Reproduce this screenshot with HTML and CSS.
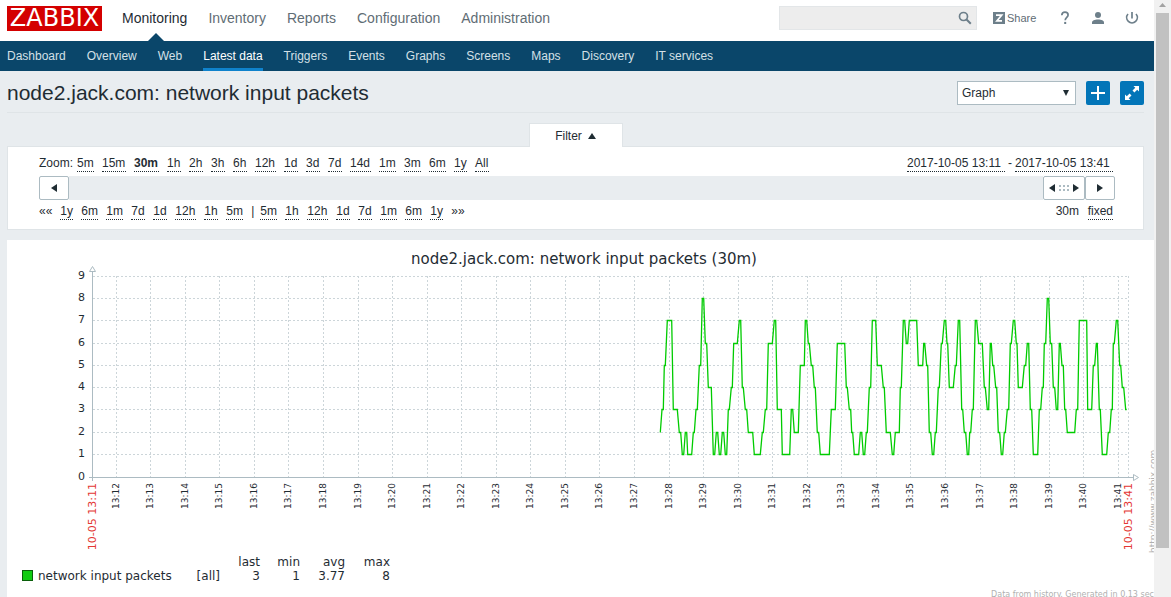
FILE: index.html
```html
<!DOCTYPE html>
<html lang="en">
<head>
<meta charset="utf-8">
<title>Zabbix: node2.jack.com</title>
<link rel="stylesheet" href="styles.css">
</head>
<body>
<div class="page">
  <header class="top">
    <a class="logo" href="#">ZABBIX</a>
    <nav class="menu" aria-label="Main">
      <a class="active" href="#">Monitoring</a>
      <a href="#">Inventory</a>
      <a href="#">Reports</a>
      <a href="#">Configuration</a>
      <a href="#">Administration</a>
    </nav>
    <form class="search">
      <input type="text" aria-label="Search">
      <button type="button" aria-label="Run search"><svg width="14" height="14" viewBox="0 0 14 14"><circle cx="5.5" cy="5.5" r="4" fill="none" stroke="#6d7f8a" stroke-width="1.7"/><path d="M8.5 8.5L12.8 12.8" stroke="#6d7f8a" stroke-width="2"/></svg></button>
    </form>
    <div class="tools">
      <a class="share" href="#"><svg width="12" height="12" viewBox="0 0 12 12"><rect width="12" height="12" fill="#6d7f8a"/><path d="M3 3.2H8.6L4 8.8H9" fill="none" stroke="#fff" stroke-width="1.8"/></svg>Share</a>
      <a class="help" href="#" aria-label="Help"><svg width="12" height="14" viewBox="0 0 12 14"><path d="M2.800 4.200C2.900 2.200 4.300 1.200 6 1.200c1.900 0 3.100 1.100 3.100 2.700 0 2.300-2.900 2.500-2.900 5.300" fill="none" stroke="#6d7f8a" stroke-width="1.7"/><rect x="5.200" y="10.900" width="2" height="2.100" fill="#6d7f8a"/></svg></a>
      <a href="#" aria-label="Profile"><svg width="12" height="14" viewBox="0 0 12 14"><circle cx="6" cy="4" r="3" fill="#6d7f8a"/><path d="M0 13v-1.500C0 9.500 2.500 8.500 6 8.500s6 1 6 3V13z" fill="#6d7f8a"/></svg></a>
      <a href="#" aria-label="Sign out"><svg width="14" height="14" viewBox="0 0 14 14"><path d="M3 3A5.300 5.300 0 1 0 11 3M7 1V7.500" fill="none" stroke="#6d7f8a" stroke-width="1.700"/></svg></a>
    </div>
  </header>
  <nav class="submenu" aria-label="Monitoring">
    <a href="#">Dashboard</a>
    <a href="#">Overview</a>
    <a href="#">Web</a>
    <a class="active" href="#">Latest data</a>
    <a href="#">Triggers</a>
    <a href="#">Events</a>
    <a href="#">Graphs</a>
    <a href="#">Screens</a>
    <a href="#">Maps</a>
    <a href="#">Discovery</a>
    <a href="#">IT services</a>
  </nav>
  <div class="heading">
    <h1>node2.jack.com: network input packets</h1>
    <div class="select">
      <select aria-label="View as"><option>Graph</option><option>Values</option></select>
      <svg width="8" height="6" viewBox="0 0 8 6"><path d="M1 0H7L4 6z" fill="#1f2c33"/></svg>
    </div>
    <button class="square" type="button" aria-label="Add to favourites"><svg width="14" height="14" viewBox="0 0 14 14"><path d="M7 0V14M0 7H14" stroke="#fff" stroke-width="2"/></svg></button>
    <button class="square" type="button" aria-label="Fullscreen"><svg width="14" height="14" viewBox="0 0 14 14"><path d="M8.500 0H14V5.500L12.200 3.700 9.400 6.500 7.500 4.600 10.300 1.800zM0 8.500L1.800 10.300 4.600 7.500 6.500 9.400 3.700 12.200 5.500 14H0z" fill="#fff"/></svg></button>
  </div>
  <section class="filter">
    <button class="tab" type="button">Filter<svg width="8" height="6" viewBox="0 0 8 6"><path d="M4 0L8 6H0z" fill="#1f2c33"/></svg></button>
    <div class="panel">
      <div class="row">
        <span class="label">Zoom:</span>
        <div class="links">
          <a class="m" href="#">5m</a><a class="dm" href="#">15m</a><a class="on" href="#">30m</a><a href="#">1h</a><a href="#">2h</a><a href="#">3h</a><a href="#">6h</a><a class="d" href="#">12h</a><a href="#">1d</a><a href="#">3d</a><a href="#">7d</a><a class="d" href="#">14d</a><a class="m" href="#">1m</a><a class="m" href="#">3m</a><a class="m" href="#">6m</a><a class="y" href="#">1y</a><a href="#">All</a>
        </div>
        <div class="period"><a href="#">2017-10-05 13:11</a><span>-</span><a href="#">2017-10-05 13:41</a></div>
      </div>
      <div class="slider">
        <button type="button" aria-label="Earlier"><svg width="6" height="8" viewBox="0 0 6 8"><path d="M6 0V8L0 4z" fill="#1f2c33"/></svg></button>
        <div class="track"></div>
        <button class="grip" type="button" aria-label="Move period"><svg width="30" height="8" viewBox="0 0 30 8"><path d="M6 0V8L0 4zM24 0V8L30 4z" fill="#1f2c33"/><path d="M10 1h2v2h-2zM14 1h2v2h-2zM18 1h2v2h-2zM10 5h2v2h-2zM14 5h2v2h-2zM18 5h2v2h-2z" fill="#acbbc2"/></svg></button>
        <button type="button" aria-label="Later"><svg width="6" height="8" viewBox="0 0 6 8"><path d="M0 0V8L6 4z" fill="#1f2c33"/></svg></button>
      </div>
      <div class="row">
        <div class="links">
          <span class="y">««</span><a class="y" href="#">1y</a><a class="m" href="#">6m</a><a class="m" href="#">1m</a><a href="#">7d</a><a href="#">1d</a><a class="d" href="#">12h</a><a href="#">1h</a><a class="m" href="#">5m</a><span class="bar">|</span><a class="m" href="#">5m</a><a href="#">1h</a><a class="d" href="#">12h</a><a href="#">1d</a><a href="#">7d</a><a class="m" href="#">1m</a><a class="m" href="#">6m</a><a class="y" href="#">1y</a><span class="y">»»</span>
        </div>
        <div class="links last"><span class="dm">30m</span><a href="#">fixed</a></div>
      </div>
    </div>
  </section>
  <main class="graph">
    <svg class="plot" id="plot" viewBox="7 240 1147 310" role="img" aria-label="Network input packets over 30 minutes"></svg>
    <table class="legend">
      <thead><tr><th></th><th></th><th>last</th><th>min</th><th>avg</th><th>max</th></tr></thead>
      <tbody><tr><td><i class="swatch"></i>network input packets</td><td>[all]</td><td>3</td><td>1</td><td>3.77</td><td>8</td></tr></tbody>
    </table>
    <p class="note">Data from history. Generated in 0.13 sec</p>
  </main>
</div>
<div class="scrollbar"><svg width="7" height="4" viewBox="0 0 7 4"><path d="M0 4L3.500 0 7 4z" fill="#a3a3a3"/></svg><div class="thumb"></div></div>
<script src="chart.js"></script>
</body>
</html>
```
FILE: styles.css
```css
* { box-sizing: border-box; }
body {
  margin: 0;
  height: 100vh;
  display: flex;
  overflow: hidden;
  background: #e9edf0;
  color: #1f2c33;
  font: 12px/16px "Liberation Sans", Arial, sans-serif;
}
a { color: inherit; text-decoration: none; }
button, input, select { font: inherit; color: inherit; margin: 0; }
button { padding: 0; display: flex; align-items: center; justify-content: center; }
svg { display: block; flex: none; }
.page { flex: 1; min-width: 0; overflow: hidden; }

.top {
  display: flex;
  align-items: center;
  height: 41px;
  padding: 0 15px 5px 7px;
  background: #fff;
}
.logo {
  width: 95px;
  height: 25px;
  background: #d40000;
  color: #fff;
  font: 24px/25px "DejaVu Sans", sans-serif;
  text-align: center;
}
.menu { display: flex; gap: 21px; margin-left: 20px; font-size: 14px; line-height: 36px; color: #5f6d75; }
.menu .active { position: relative; color: #1f2c33; }
.menu .active::after {
  content: "";
  position: absolute;
  left: 50%;
  bottom: -5px;
  margin-left: -7px;
  border: 8px solid transparent;
  border-top-width: 0;
  border-bottom-color: #0a466a;
}
.search {
  display: flex;
  align-items: center;
  width: 198px;
  height: 24px;
  margin-left: auto;
  padding-right: 4px;
  border: 1px solid #e3e6e8;
  background: #ededed;
}
.search input { flex: 1; min-width: 0; border: 0; background: none; outline: 0; }
.search button { border: 0; background: none; }
.tools { display: flex; align-items: center; gap: 21px; margin-left: 16px; }
.share { display: flex; align-items: center; gap: 2px; min-width: 45px; font-size: 11px; color: #5f6d75; }

.submenu {
  display: flex;
  gap: 21px;
  height: 30px;
  padding: 0 7px;
  background: #0a466a;
  color: #d4e0e7;
  line-height: 30px;
}
.submenu .active { color: #fff; box-shadow: inset 0 -3px #0f82cc; }

.heading {
  display: flex;
  align-items: center;
  gap: 10px;
  height: 42px;
  margin: 0 10px 0 7px;
  padding-top: 2px;
  border-bottom: 1px solid #dfe4e7;
}
h1 { flex: 1; margin: 0; font-size: 21px; line-height: 24px; font-weight: 400; }
.select { position: relative; width: 119px; }
.select select {
  display: block;
  width: 100%;
  height: 24px;
  padding: 0 4px;
  border: 1px solid #acbbc2;
  border-radius: 0;
  background: #fff;
  appearance: none;
}
.select svg { position: absolute; right: 6px; top: 9px; pointer-events: none; }
.square { width: 24px; height: 24px; border: 0; border-radius: 2px; background: #0275b8; }

.filter { margin: 10px 10px 10px 7px; }
.tab {
  position: relative;
  gap: 6px;
  width: 94px;
  height: 24px;
  margin: 0 auto -1px;
  border: 1px solid #dfe4e7;
  border-bottom: 0;
  background: #fff;
}
.panel { padding: 8px 28px 9px 31px; border: 1px solid #dfe4e7; background: #fff; }
.row { display: flex; align-items: flex-start; padding-right: 2px; }
.row a { border-bottom: 1px dotted #1f2c33; }
.label { width: 38px; }
.links { display: flex; gap: 8px; }
.links > * { min-width: 14px; }
.links .y { min-width: 13px; }
.links .m { min-width: 17px; }
.links .d { min-width: 21px; }
.links .dm { min-width: 24px; }
.links .on { min-width: 25px; font-weight: 700; }
.links .bar { width: 1px; min-width: 0; }
.period { display: flex; gap: 3px; margin-left: auto; }
.period a { min-width: 98px; }
.last { margin-left: auto; }
.slider { display: flex; height: 24px; margin: 4px 0 3px; }
.slider button { width: 30px; border: 1px solid #acbbc2; border-radius: 2px; background: #fff; }
.slider .grip { width: 42px; }
.track { flex: 1; background: #e9edf0; }

.graph { height: 100vh; margin-left: 7px; background: #fff; }
.plot { width: 100%; overflow: visible; font-family: "DejaVu Sans", sans-serif; fill: #1f2c33; }
.title { font-size: 15px; text-anchor: middle; }
.value { font-size: 11px; text-anchor: end; }
.time { font-size: 9px; text-anchor: end; }
.edge { font-size: 11px; text-anchor: end; fill: #e33734; }
.mark { font-size: 9px; fill: #b0b0b0; }
.grid { stroke: #ccd5d9; stroke-dasharray: 2 2; }
.axis { stroke: #acbbc2; fill: #fff; }
.series { fill: none; stroke: #0c0; stroke-width: 1.3; }
.legend {
  margin: 5px 0 0 15px;
  border-collapse: collapse;
  font: 12px/14px "DejaVu Sans", sans-serif;
}
.legend th, .legend td { width: 40px; padding: 0; font-weight: 400; text-align: right; }
.legend th:nth-child(n+5) { width: 45px; }
.legend th:first-child, .legend td:first-child { width: 158px; text-align: left; }
.swatch {
  display: inline-block;
  width: 11px;
  height: 11px;
  margin-right: 5px;
  border: 1px solid #0a5f0a;
  background: #1c1;
  vertical-align: -1px;
}
.note { margin: 7px 0 0; text-align: right; font: 8px/10px "DejaVu Sans", sans-serif; color: #b0b0b0; }

.scrollbar { width: 17px; padding: 3px 2px 0; background: #f1f1f1; }
.scrollbar svg { margin: 0 auto 6px; }
.thumb { height: 90%; background: #c1c1c1; }
```
FILE: chart.js
```js
const NS = "http://www.w3.org/2000/svg";
const plot = document.getElementById("plot");

function add(tag, attrs, text) {
  const el = document.createElementNS(NS, tag);
  for (const key in attrs) el.setAttribute(key, attrs[key]);
  if (text !== undefined) el.textContent = text;
  plot.appendChild(el);
}
function vertical(cls, x, y, text) {
  add("text", { class: cls, transform: `translate(${x} ${y}) rotate(-90)` }, text);
}

const levels = [477, 454, 432, 409, 387, 365, 343, 320, 298, 276];

add("text", { class: "title", x: 584, y: 264 }, "node2.jack.com: network input packets (30m)");
levels.forEach((y, value) => {
  if (value) add("path", { class: "grid", d: `M93 ${y + 0.5}H1129` });
  add("text", { class: "value", x: 85, y: y + 3 }, value);
});
for (let i = 0; i < 30; i++) {
  const x = Math.floor(116.2 + 34.555 * i);
  add("path", { class: "grid", d: `M${x + 0.5} 276V477` });
  vertical("time", x + 3, 483, "13:" + (12 + i));
}
add("path", { class: "grid", d: "M1128.5 276V477" });
vertical("edge", 96, 483, "10-05 13:11");
vertical("edge", 1132, 483, "10-05 13:41");
add("path", { class: "axis", d: "M92.5 481V271.500M89 477.500H1133M89.500 271.500L92.500 266.500 95.500 271.500zM1133.500 474.500L1138.500 477.500 1133.500 480.500z" });
vertical("mark", 1156, 553, "http://www.zabbix.com");

/* Samples as "offset:value"; three offset units make one chart unit. */
const chunks = [
  "61:2 66:3 70:3 73:5 76:5 82:7 95:7 100:3 112:3 118:2 122:2 127:1 131:1 136:2 140:2 143:1 155:1 160:2 163:2 168:3 172:3 178:5 182:5 187:8 191:8 196:6 200:6 205:4 214:4 220:1 224:1 229:2 233:2 238:1 242:1 247:2 251:2 256:1 260:1 265:3 268:3 274:4 277:4 281:6 292:6 298:7 302:7 307:4 310:4 316:3 320:3 325:2 338:2 343:1 361:1 367:2 370:2 376:3 380:3 385:6 397:6 403:7 407:7 412:3 424:3 427:1 449:1 454:3 458:3 463:2 475:2 481:5 493:5",
  "16:7 20:7 25:6 28:6 34:5 38:5 43:4 46:4 52:2 56:2 61:1 88:1 94:3 106:3 112:6 134:6 139:4 142:4 148:3 152:3 155:2 158:2 163:1 176:1 181:2 185:2 190:1 194:1 199:2 202:2 208:4 212:4 217:7 227:7 232:5 244:5 250:4 253:4 259:2 271:2 277:1 281:1 286:2 298:2 301:4 304:4 310:7 314:7 319:6 323:6 328:7 350:7 355:5 368:5 371:6 374:6 380:5 383:5 388:2 392:2 397:1 401:1 406:2 409:2 415:4 418:4 424:6 427:6 433:7 437:7 441:6 443:6 448:4 460:4 466:5 469:5 475:7 479:7",
  "5:3 8:3 13:2 17:2 22:1 26:1 29:2 32:2 37:3 40:3 46:7 50:7 56:6 67:6 73:4 76:4 82:3 86:3 91:6 94:6 98:5 101:5 107:4 110:4 115:2 119:2 124:1 128:1 133:2 136:2 142:3 146:3 151:6 154:6 160:7 164:7 169:6 171:6 175:4 187:4 193:5 197:5 202:6 206:6 211:3 215:3 220:1 233:1 238:3 242:3 247:4 250:4 253:6 257:6 262:8 266:8 271:6 275:6 280:4 284:4 289:3 293:3 298:6 301:6 306:5 310:5 314:3 317:3 322:2 344:2 349:3 353:3 358:7 380:7 383:3 395:3 400:5 404:5 409:6 412:6 418:3 421:3 427:1 440:1 445:2 449:2 454:3 457:3 460:6 463:6 469:7 473:7 479:5 482:5 487:4 491:4 497:3 500:3"
];
const points = chunks.flatMap((chunk, i) => chunk.split(" ").map(sample => {
  const [offset, value] = sample.split(":").map(Number);
  return `${(640 + 160 * i + offset / 3).toFixed(1)},${levels[value] + 0.5}`;
}));
add("polyline", { class: "series", points: points.join(" ") });
```
